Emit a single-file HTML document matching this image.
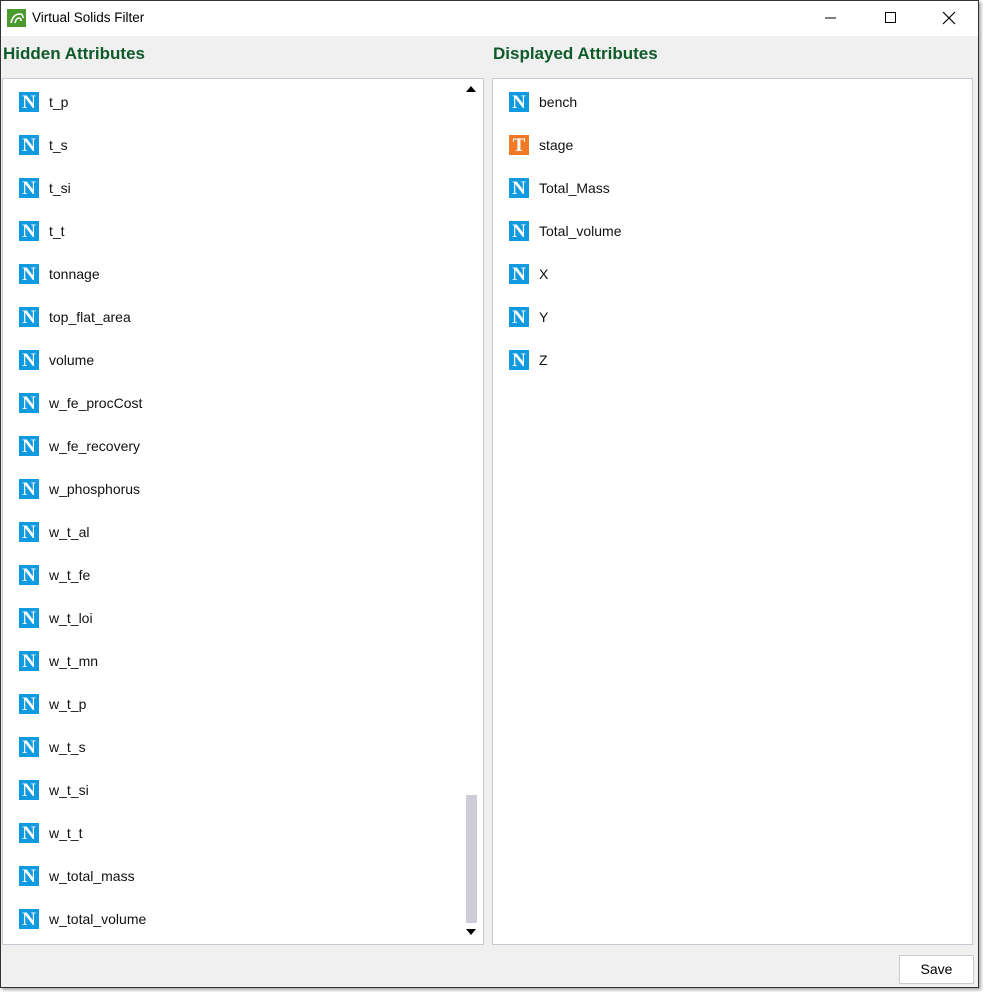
<!DOCTYPE html>
<html><head><style>
*{margin:0;padding:0;box-sizing:border-box}
body{width:983px;height:992px;background:#fff;font-family:"Liberation Sans",sans-serif;position:relative;overflow:hidden}
.win{position:absolute;left:0;top:0;width:979px;height:988px;border:1px solid #333;background:#f0f0f0;box-shadow:2px 2px 3px rgba(0,0,0,.35)}
.title{position:absolute;left:0;top:0;width:977px;height:35px;background:#fff}
.title .t{position:absolute;left:31px;top:9px;font-size:13.5px;color:#000}
.logo{position:absolute;left:6px;top:8px;width:19px;height:18px;background:#4a9a2e}
h2{position:absolute;top:43px;font-size:17px;font-weight:bold;color:#0f5a2a}
.panel{position:absolute;top:77px;height:867px;background:#fff;border:1px solid #c9c9d6}
.item{position:absolute;left:16px;height:20px;font-size:14px;color:#111;line-height:20px}
.ic{position:absolute;left:0;top:0;width:20px;height:20px;color:#fff;font-family:"Liberation Serif",serif;font-weight:bold;font-size:19px;text-align:center;line-height:21px}
.n{background:#109be0}.tt{background:#f37a25}
.item span{position:absolute;left:30px;top:0;white-space:nowrap}
.thumb{position:absolute;left:463px;top:716px;width:11px;height:128px;background:#cdcdd9}
.btn{position:absolute;left:898px;top:954px;width:75px;height:29px;background:#fff;border:1px solid #ccc;font-size:14px;text-align:center;line-height:27px}
</style></head><body>
<div class="win">
<div class="title"><div class="logo"><svg width="19" height="18"><path d="M4 14 Q6 5 13 5 Q16 5 16 9 M8 14 Q9 9 12 9 Q14 9 14 12" stroke="#fff" stroke-width="1.6" fill="none"/></svg></div><div class="t">Virtual Solids Filter</div>
<svg style="position:absolute;left:820px;top:10px" width="140" height="14"><line x1="4" y1="7" x2="15" y2="7" stroke="#000"/><rect x="64.5" y="1.5" width="10" height="10" fill="none" stroke="#000"/><path d="M122 1 L134 13 M134 1 L122 13" stroke="#000" stroke-width="1.2"/></svg></div>
<h2 style="left:2px">Hidden Attributes</h2>
<h2 style="left:492px">Displayed Attributes</h2>
<div class="panel" style="left:1px;width:482px">
<svg style="position:absolute;left:462px;top:6px" width="12" height="8"><path d="M1 7 L6 1 L11 7Z" fill="#000"/></svg>
<svg style="position:absolute;left:462px;top:849px" width="12" height="8"><path d="M1 1 L6 7 L11 1Z" fill="#000"/></svg>
<div class="thumb"></div>
<div id="L"></div>
</div>
<div class="panel" style="left:491px;width:481px"><div id="R"></div></div>
<div class="btn">Save</div>
</div>
<script>
var L=["t_p","t_s","t_si","t_t","tonnage","top_flat_area","volume","w_fe_procCost","w_fe_recovery","w_phosphorus","w_t_al","w_t_fe","w_t_loi","w_t_mn","w_t_p","w_t_s","w_t_si","w_t_t","w_total_mass","w_total_volume"];
var R=[["bench","n"],["stage","t"],["Total_Mass","n"],["Total_volume","n"],["X","n"],["Y","n"],["Z","n"]];
var h="";L.forEach(function(s,i){h+='<div class="item" style="top:'+(13+43*i)+'px;left:16px"><div class="ic n">N</div><span>'+s+'</span></div>'});
document.getElementById("L").innerHTML=h;h="";
R.forEach(function(s,i){h+='<div class="item" style="top:'+(13+43*i)+'px;left:16px"><div class="ic '+(s[1]=="n"?"n":"tt")+'">'+(s[1]=="n"?"N":"T")+'</div><span>'+s[0]+'</span></div>'});
document.getElementById("R").innerHTML=h;
</script>
</body></html>
